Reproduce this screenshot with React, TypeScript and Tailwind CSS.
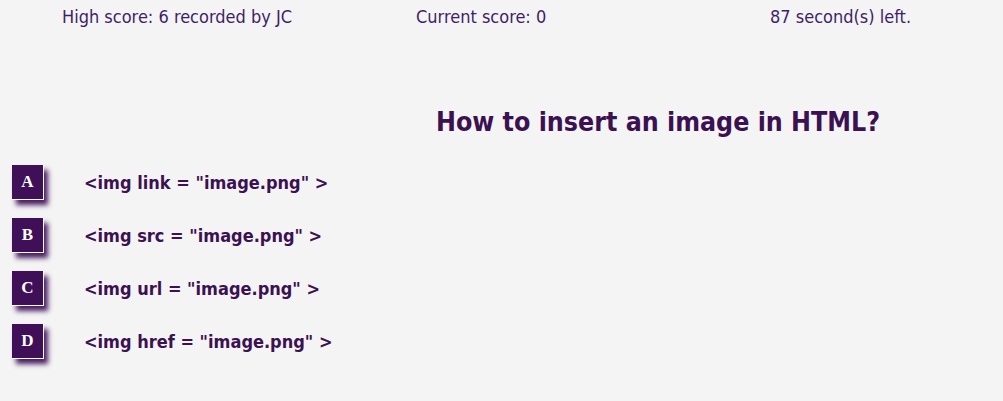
const options = [
  { key: "A", text: '<img link = "image.png" >' },
  { key: "B", text: '<img src = "image.png" >' },
  { key: "C", text: '<img url = "image.png" >' },
  { key: "D", text: '<img href = "image.png" >' },
];

export default function App() {
  return (
    <div className="w-[1003px] h-[401px] bg-[#f4f4f4] font-['DejaVu_Sans_Condensed','DejaVu_Sans',sans-serif] overflow-hidden">
      {/* Score bar */}
      <div className="flex pt-[6px] text-[18px] leading-[22px] text-[#3f1f68]">
        <div className="w-[416px] pl-[62px]">High score: 6 recorded by JC</div>
        <div className="w-[354px]">Current score: 0</div>
        <div>87 second(s) left.</div>
      </div>

      {/* Question */}
      <h1 className="mt-[78px] pl-[313px] text-center text-[26.5px] leading-[32px] font-bold text-[#3b1152]">
        How to insert an image in HTML?
      </h1>

      {/* Answers */}
      <div className="mt-[27px] flex flex-col gap-[18px] pl-[12px]">
        {options.map((o) => (
          <div key={o.key} className="flex items-center gap-[40px]">
            <div className="w-[32px] h-[35px] flex items-center justify-center bg-[#3f1058] border-r border-b border-white shadow-[4px_5px_5px_#4a1e63] text-white font-bold text-[17px] font-['Liberation_Serif',serif]">
              {o.key}
            </div>
            <span className="text-[18px] font-bold text-[#3b1152]">{o.text}</span>
          </div>
        ))}
      </div>
    </div>
  );
}
